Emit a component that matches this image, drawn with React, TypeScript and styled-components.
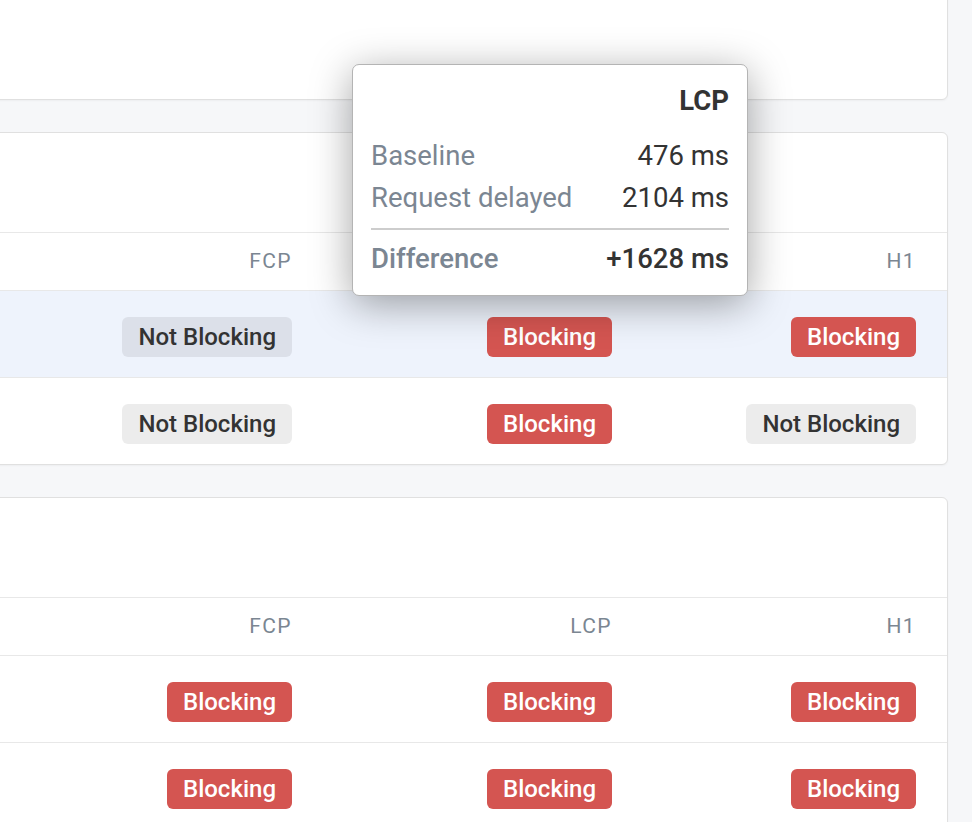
import React from "react";
import styled, { createGlobalStyle } from "styled-components";

type Status = "blocking" | "not";

interface Row {
  id: string;
  fcp: Status;
  lcp: Status;
  h1: Status;
  active?: boolean;
}

interface Experiment {
  id: string;
  rows: Row[];
}

const GlobalStyle = createGlobalStyle`
  html, body {
    margin: 0;
    padding: 0;
    background: #f6f7f9;
    font-family: Roboto, "Liberation Sans", Arial, sans-serif;
    color: #333;
    overflow: hidden;
  }
`;

const Page = styled.div`
  position: relative;
  display: flex;
  flex-direction: column;
  gap: 32px;
  margin: -60px 24px 0 -200px;
`;

const Card = styled.section<{ $height?: number }>`
  background: #fff;
  border: 1px solid #e0e0e0;
  border-radius: 6px;
  box-shadow: 0 1px 2px rgba(0, 0, 0, 0.04);
  ${(p) => (p.$height ? `height: ${p.$height}px;` : "")}
`;

const CardHeader = styled.div`
  height: 99px;
`;

const Grid = styled.div`
  display: grid;
  grid-template-columns: 1fr 320px 320px 304px;
`;

const HeadRow = styled(Grid)`
  border-top: 1px solid #e8e8e8;
  height: 57px;
  align-items: center;
`;

const HeadCell = styled.div`
  text-align: right;
  padding-right: 31px;
  font-size: 21px;
  letter-spacing: 1.4px;
  color: #7b8692;
  margin-top: -1px;
`;

const BodyRow = styled(Grid)<{ $active?: boolean }>`
  border-top: 1px solid #e8e8e8;
  padding: 26px 0 20px;
  background: ${(p) => (p.$active ? "#eef3fc" : "transparent")};
`;

const Cell = styled.div`
  display: flex;
  justify-content: flex-end;
  padding-right: 31px;
`;

const Badge = styled.span<{ $status: Status }>`
  display: inline-flex;
  align-items: center;
  height: 40px;
  padding: 0 16px;
  border-radius: 6px;
  font-size: 24px;
  font-weight: 500;
  background: ${(p) => (p.$status === "blocking" ? "#d45551" : "rgba(0, 0, 0, 0.075)")};
  color: ${(p) => (p.$status === "blocking" ? "#fff" : "#333")};
`;

const Tooltip = styled.div`
  position: absolute;
  left: 552px;
  top: 124px;
  width: 358px;
  padding: 17px 18px 15px;
  background: #fff;
  border: 1px solid #b4b4b4;
  border-radius: 7px;
  box-shadow: 0 8px 40px rgba(0, 0, 0, 0.36);
  z-index: 10;
`;

const TipTitle = styled.div`
  text-align: right;
  font-size: 27.5px;
  font-weight: 700;
  line-height: 38px;
  color: #333;
  margin-bottom: 15px;
`;

const TipRow = styled.div<{ $total?: boolean }>`
  display: flex;
  justify-content: space-between;
  font-size: 27.5px;
  line-height: 42px;
  font-weight: ${(p) => (p.$total ? 500 : 400)};
`;

const TipLabel = styled.span`
  color: #7b8692;
`;

const TipValue = styled.span`
  color: #333;
`;

const Divider = styled.hr`
  border: none;
  border-top: 2px solid #cdcdcd;
  margin: 9px 0 8px;
`;

const label = (s: Status) => (s === "blocking" ? "Blocking" : "Not Blocking");

const experiments: Experiment[] = [
  {
    id: "fonts",
    rows: [
      { id: "main.css", fcp: "not", lcp: "blocking", h1: "blocking", active: true },
      { id: "app.js", fcp: "not", lcp: "blocking", h1: "not" },
    ],
  },
  {
    id: "scripts",
    rows: [
      { id: "vendor.js", fcp: "blocking", lcp: "blocking", h1: "blocking" },
      { id: "theme.css", fcp: "blocking", lcp: "blocking", h1: "blocking" },
    ],
  },
];

function ResultTable({ exp }: { exp: Experiment }) {
  return (
    <Card>
      <CardHeader />
      <HeadRow>
        <div />
        <HeadCell>FCP</HeadCell>
        <HeadCell>LCP</HeadCell>
        <HeadCell>H1</HeadCell>
      </HeadRow>
      {exp.rows.map((r) => (
        <BodyRow key={r.id} $active={r.active}>
          <div />
          <Cell>
            <Badge $status={r.fcp}>{label(r.fcp)}</Badge>
          </Cell>
          <Cell>
            <Badge $status={r.lcp}>{label(r.lcp)}</Badge>
          </Cell>
          <Cell>
            <Badge $status={r.h1}>{label(r.h1)}</Badge>
          </Cell>
        </BodyRow>
      ))}
    </Card>
  );
}

export default function App() {
  return (
    <>
      <GlobalStyle />
      <Page>
        <Card $height={158} />
        {experiments.map((e) => (
          <ResultTable key={e.id} exp={e} />
        ))}
        <Tooltip>
          <TipTitle>LCP</TipTitle>
          <TipRow>
            <TipLabel>Baseline</TipLabel>
            <TipValue>476 ms</TipValue>
          </TipRow>
          <TipRow>
            <TipLabel>Request delayed</TipLabel>
            <TipValue>2104 ms</TipValue>
          </TipRow>
          <Divider />
          <TipRow $total>
            <TipLabel>Difference</TipLabel>
            <TipValue>+1628 ms</TipValue>
          </TipRow>
        </Tooltip>
      </Page>
    </>
  );
}
